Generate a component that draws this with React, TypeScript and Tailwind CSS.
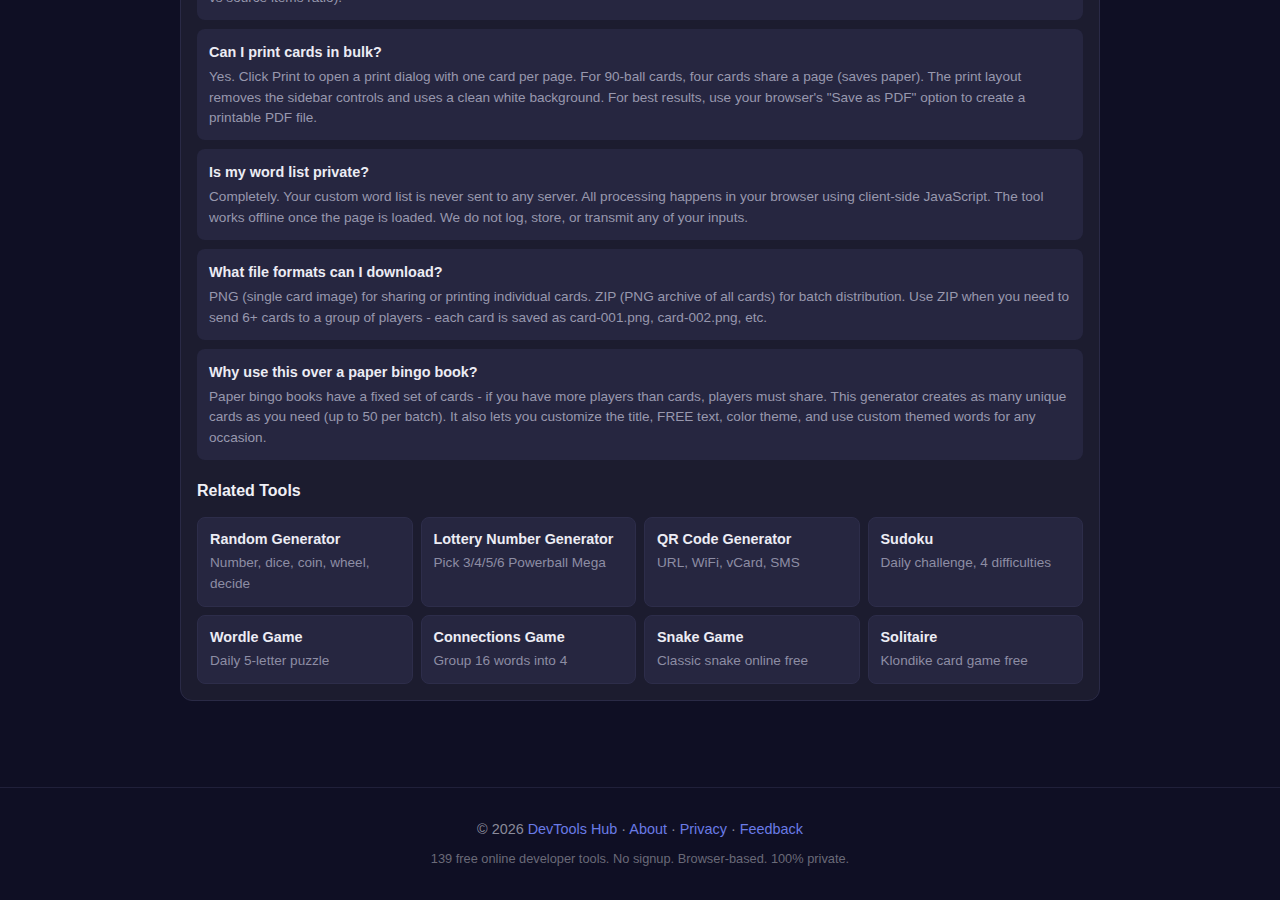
import React from 'react'

interface Faq {
  q: string
  a: string
}

interface Tool {
  name: string
  desc: string
}

const faqs: Faq[] = [
  {
    q: 'How random are the cards?',
    a: 'Each card is shuffled independently with a cryptographically seeded Fisher-Yates shuffle. Duplicate cards are rejected and regenerated, so every card in a batch is unique (the odds depend on your word list size\nvs source items ratio).',
  },
  {
    q: 'Can I print cards in bulk?',
    a: 'Yes. Click Print to open a print dialog with one card per page. For 90-ball cards, four cards share a page (saves paper). The print layout removes the sidebar controls and uses a clean white background. For best results, use your browser\'s "Save as PDF" option to create a printable PDF file.',
  },
  {
    q: 'Is my word list private?',
    a: 'Completely. Your custom word list is never sent to any server. All processing happens in your browser using client-side JavaScript. The tool works offline once the page is loaded. We do not log, store, or transmit any of your inputs.',
  },
  {
    q: 'What file formats can I download?',
    a: 'PNG (single card image) for sharing or printing individual cards. ZIP (PNG archive of all cards) for batch distribution. Use ZIP when you need to send 6+ cards to a group of players - each card is saved as card-001.png, card-002.png, etc.',
  },
  {
    q: 'Why use this over a paper bingo book?',
    a: 'Paper bingo books have a fixed set of cards - if you have more players than cards, players must share. This generator creates as many unique cards as you need (up to 50 per batch). It also lets you customize the title, FREE text, color theme, and use custom themed words for any occasion.',
  },
]

const tools: Tool[] = [
  { name: 'Random Generator', desc: 'Number, dice, coin, wheel, decide' },
  { name: 'Lottery Number Generator', desc: 'Pick 3/4/5/6 Powerball Mega' },
  { name: 'QR Code Generator', desc: 'URL, WiFi, vCard, SMS' },
  { name: 'Sudoku', desc: 'Daily challenge, 4 difficulties' },
  { name: 'Wordle Game', desc: 'Daily 5-letter puzzle' },
  { name: 'Connections Game', desc: 'Group 16 words into 4' },
  { name: 'Snake Game', desc: 'Classic snake online free' },
  { name: 'Solitaire', desc: 'Klondike card game free' },
]

function FaqItem({ item }: { item: Faq }) {
  return (
    <div className="rounded-lg bg-[#262640] px-3 pb-3 pt-[13px]">
      <h3 className="mb-[5px] text-[14.4px] font-bold leading-5 text-[#ececf4]">{item.q}</h3>
      <p className="whitespace-pre-line text-[13.6px] leading-[20.4px] text-[#9898ae]">{item.a}</p>
    </div>
  )
}

function ToolCard({ tool }: { tool: Tool }) {
  return (
    <a
      href="#"
      className="block rounded-lg border border-[#2d2d4a] bg-[#262640] px-3 py-3 transition-colors hover:border-[#667eea]"
    >
      <div className="text-[14.4px] font-bold leading-[18px] text-[#ececf4]">{tool.name}</div>
      <div className="mt-1 text-[13.6px] leading-[21px] text-[#8d8da4]">{tool.desc}</div>
    </a>
  )
}

export default function App() {
  return (
    <div
      className="min-h-screen overflow-hidden bg-[#0f0f24] text-white"
      style={{ fontFamily: '"Liberation Sans", Arial, Helvetica, sans-serif' }}
    >
      <main className="mx-auto -mt-[108px] w-[920px]">
        <section className="rounded-xl border border-[#2a2a46] bg-[#1c1c2f] p-4">
          <div className="flex flex-col gap-[9px]">
            {faqs.map((f) => (
              <FaqItem key={f.q} item={f} />
            ))}
          </div>

          <h2 className="mb-[15px] mt-5 text-base font-bold leading-[22px] text-[#f0f0f6]">Related Tools</h2>
          <div className="grid grid-cols-4 gap-2">
            {tools.map((t) => (
              <ToolCard key={t.name} tool={t} />
            ))}
          </div>
        </section>
      </main>

      <footer className="mt-[86px] border-t border-[#20203a] pb-8 pt-[31px] text-center">
        <p className="text-[14.4px] leading-5 text-[#8a8a9a]">
          © 2026 <a href="#" className="text-[#6a7be6]">DevTools Hub</a> ·{' '}
          <a href="#" className="text-[#6a7be6]">About</a> ·{' '}
          <a href="#" className="text-[#6a7be6]">Privacy</a> ·{' '}
          <a href="#" className="text-[#6a7be6]">Feedback</a>
        </p>
        <p className="mt-[10px] text-[12.8px] leading-5 text-[#6a6a78]">
          139 free online developer tools. No signup. Browser-based. 100% private.
        </p>
      </footer>
    </div>
  )
}
